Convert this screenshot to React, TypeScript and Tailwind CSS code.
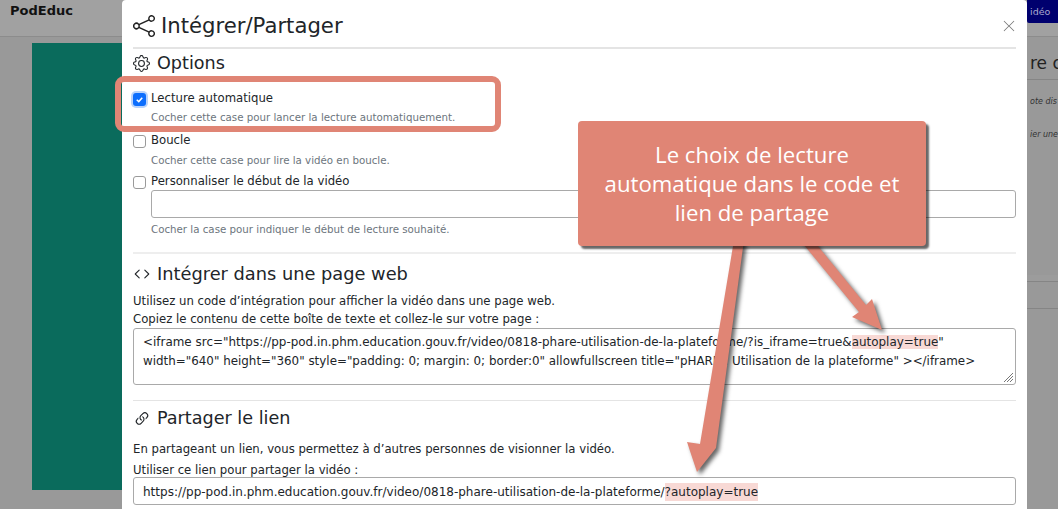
import { BsCode, BsGear, BsLink45Deg, BsShare, BsXLg } from "react-icons/bs";

const sans = "font-['DejaVu_Sans',Verdana,sans-serif]";

const OptionRow = ({ label, checked, short }: { label: string; checked?: boolean; short?: boolean }) => (
  <label className={`flex items-center gap-[5px] text-[11.7px] text-[#212529] ${short ? "h-[17px] pt-[1px]" : "h-[18px]"}`}>
    {checked ? (
      <span className="flex h-[13px] w-[13px] items-center justify-center rounded-[3px] bg-[#0d6efd] shadow-[0_0_0_2px_#b9d3fb]">
        <svg viewBox="0 0 12 12" className="h-[11px] w-[11px]">
          <path d="M3 6.2 5.2 8.3 9 4" fill="none" stroke="#fff" strokeWidth="1.6" />
        </svg>
      </span>
    ) : (
      <span className="h-[13px] w-[13px] rounded-[3px] border border-[#9a9a9a] bg-white" />
    )}
    <span>{label}</span>
  </label>
);

export default function App() {
  return (
    <div className={`relative h-[509px] w-[1058px] overflow-hidden bg-[#999999] ${sans}`}>
      {/* page behind the modal */}
      <div className="flex h-[37px] items-start border-b border-[#8c8c8c] bg-[#a1a1a1] pl-[10px]">
        <span className="pt-[1px] text-[13px] font-bold text-[#111]">PodEduc</span>
      </div>
      <div className="ml-[32px] mt-[6px] h-[447px] w-[95px] bg-[#0a6b5c]" />

      <div className="absolute right-0 top-0 h-[23px] w-[31px] overflow-hidden rounded-bl-[2px] bg-[#00006e] pl-[3px] pt-[5px] text-[9.5px] text-[#a9a9cf]">
        idéo
      </div>
      <div className="absolute left-[1027px] right-0 top-[52px] h-[28px] overflow-hidden whitespace-nowrap border-b border-[#858585] pl-[3px] text-[17px] leading-[22px] text-[#222]">
        re c
      </div>
      <div className="absolute left-[1030px] top-[96px] w-[28px] overflow-hidden whitespace-nowrap text-[8px] italic text-[#333]">ote dis</div>
      <div className="absolute left-[1030px] top-[129px] w-[28px] overflow-hidden whitespace-nowrap text-[8px] italic text-[#333]">ier une</div>
      <div className="absolute left-[1027px] right-0 top-[275px] h-[7px] border-b border-[#858585] bg-[#9c9c9c]" />
      <div className="absolute left-[1027px] right-0 top-[308px] h-px bg-[#858585]" />

      {/* modal */}
      <div className="absolute bottom-0 left-[122px] top-0 w-[905px] rounded-t-[4px] bg-white px-[11px]">
        <div className="flex h-[49px] items-center border-b-2 border-[#e4e4e4] pt-[5px]">
          <BsShare size={22} className="mr-[6px] text-[#222]" />
          <h1 className="flex-1 text-[21.2px] text-[#212529]">Intégrer/Partager</h1>
          <BsXLg size={14} className="text-[#777]" />
        </div>

        <div className="flex h-[28px] items-center gap-[7px] text-[17.6px] text-[#212529]">
          <BsGear size={17} />
          Options
        </div>

        <div className="mt-[13px] flex flex-col">
          <OptionRow label="Lecture automatique" checked />
          <p className="mb-[5px] ml-[18px] h-[18px] text-[10.25px] leading-[18px] text-[#6c757d]">
            Cocher cette case pour lancer la lecture automatiquement.
          </p>
          <div className="pt-[1px]">
            <OptionRow label="Boucle" />
          </div>
          <p className="mb-[3px] ml-[18px] h-[20px] text-[10.25px] leading-[20px] text-[#6c757d]">
            Cocher cette case pour lire la vidéo en boucle.
          </p>
          <OptionRow label="Personnaliser le début de la vidéo" short />
          <div className="ml-[18px] h-[28px] rounded-[3px] border border-[#a9a9a9] bg-white" />
          <p className="ml-[18px] h-[22px] text-[10.25px] leading-[22px] text-[#6c757d]">
            Cocher la case pour indiquer le début de lecture souhaité.
          </p>
        </div>

        <div className="mt-[12px] border-t-2 border-[#eeeeee]" />

        <div className="flex h-[37px] items-center gap-[6px] pt-[3px] text-[17.8px] text-[#212529]">
          <BsCode size={18} />
          Intégrer dans une page web
        </div>
        <p className="h-[18px] text-[11.7px] leading-[20px] text-[#212529]">
          Utilisez un code d’intégration pour afficher la vidéo dans une page web.
        </p>
        <p className="h-[19px] text-[11.7px] leading-[21px] text-[#212529]">
          Copiez le contenu de cette boîte de texte et collez-le sur votre page :
        </p>
        <div className="relative h-[57px] rounded-[3px] border border-[#a9a9a9] px-[9px] pt-[4px] text-[11.95px] leading-[19px] text-[#212529]">
          <div className="whitespace-nowrap">
            {'<iframe src="https://pp-pod.in.phm.education.gouv.fr/video/0818-phare-utilisation-de-la-plateforme/?is_iframe=true&'}
            <span className="bg-[#f8d9d5]">autoplay=true</span>
            {'"'}
          </div>
          <div className="whitespace-nowrap text-[11.9px]">
            {'width="640" height="360" style="padding: 0; margin: 0; border:0" allowfullscreen title="pHARE : Utilisation de la plateforme" ></iframe>'}
          </div>
          <svg viewBox="0 0 12 12" className="absolute bottom-[1px] right-[1px] h-[12px] w-[12px]">
            <path d="M11 2 2 11M11 5 5 11M11 8 8 11" stroke="#777" strokeWidth="1" />
          </svg>
        </div>

        <div className="mt-[15px] border-t border-[#e4e4e4]" />

        <div className="flex h-[33px] items-center gap-[6px] pt-[2px] text-[17.6px] text-[#212529]">
          <BsLink45Deg size={18} />
          Partager le lien
        </div>
        <p className="mt-[4px] h-[21px] text-[11.7px] leading-[23px] text-[#212529]">
          En partageant un lien, vous permettez à d’autres personnes de visionner la vidéo.
        </p>
        <p className="h-[18px] text-[11.7px] leading-[22px] text-[#212529]">
          Utiliser ce lien pour partager la vidéo :
        </p>
        <div className="flex h-[28px] items-center whitespace-nowrap rounded-[3px] border border-[#a9a9a9] px-[9px] pt-[1px] text-[12px] text-[#212529]">
          https://pp-pod.in.phm.education.gouv.fr/video/0818-phare-utilisation-de-la-plateforme/
          <span className="bg-[#f8d9d5]">?autoplay=true</span>
        </div>
      </div>

      {/* annotations over the modal */}
      <div className="absolute left-[115px] top-[76px] h-[56px] w-[386px] rounded-[9px] border-[6px] border-[#e08575]" />

      <svg viewBox="0 0 1058 509" className="absolute inset-0 h-[509px] w-[1058px] drop-shadow-[3px_3px_2px_rgba(0,0,0,0.6)]">
        <polygon points="734,240 744,240 716,448 697,472 687,442 700,444" fill="#e08575" />
        <polygon points="800,240 813,240 866,305 872,299 882,330 852,317 859,312" fill="#e08575" />
      </svg>

      <div className="absolute left-[578px] top-[121px] flex h-[125px] w-[348px] items-center justify-center rounded-[4px] bg-[#e08575] px-[24px] text-center font-['Open_Sans',sans-serif] text-[22.2px] leading-[29px] text-white shadow-[3px_3px_2px_rgba(0,0,0,0.6)]">
        Le choix de lecture automatique dans le code et lien de partage
      </div>
    </div>
  );
}
